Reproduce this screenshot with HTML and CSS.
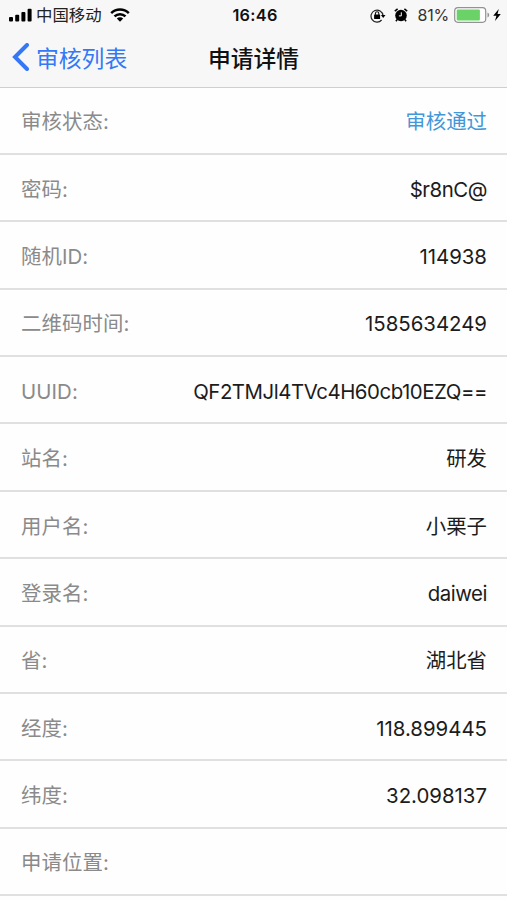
FILE: index.html
```html
<!DOCTYPE html>
<html lang="zh-CN">
<head>
  <meta charset="UTF-8">
  <meta name="viewport" content="width=device-width, initial-scale=1.0">
  <title>申请详情</title>
  <link rel="stylesheet" href="styles.css">
</head>
<body>

<header class="header">
  <div class="status-bar">
    <div class="status-left">
      <svg class="signal" width="23" height="14" viewBox="0 0 23 14">
        <rect x="0" y="9" width="4" height="4.5" rx="1"/>
        <rect x="6.2" y="6.8" width="4" height="6.7" rx="1"/>
        <rect x="12.4" y="4" width="4" height="9.5" rx="1"/>
        <rect x="18.6" y="0.8" width="4" height="12.7" rx="1"/>
      </svg>
      <span class="carrier">中国移动</span>
      <svg class="wifi" width="20" height="14" viewBox="0 0 20 14">
        <path d="M1.2 5.1a12.5 12.5 0 0 1 17.6 0M4.5 8.4a7.8 7.8 0 0 1 11 0" fill="none" stroke="#000" stroke-width="2.5"/>
        <path d="M6.8 10.5a4.5 4.5 0 0 1 6.4 0L10 13.7z"/>
      </svg>
    </div>
    <span class="clock">16:46</span>
    <div class="status-right">
      <svg class="lock" width="17" height="15" viewBox="0 0 17 15">
        <path d="M11.6 12A6 6 0 1 1 13 7.4" fill="none" stroke="#222" stroke-width="1.2"/>
        <path d="M10.9 7h4.6l-2.3 3z"/>
        <rect x="4.1" y="6.6" width="6" height="4.4" rx=".6"/>
        <path d="M5.4 7V5.4a1.7 1.7 0 0 1 3.4 0V7" fill="none" stroke="#111" stroke-width="1.1"/>
      </svg>
      <svg class="alarm" width="14" height="14" viewBox="0 0 14 14">
        <circle cx="7" cy="7.5" r="5.8"/>
        <path d="M.8 3.1L3.6.9M13.2 3.1L10.4.9M3.2 11.5L1.9 13.2M10.8 11.5l1.3 1.7" fill="none" stroke="#000" stroke-width="1.5"/>
        <path d="M7.3 4.3v3.6H4.9" fill="none" stroke="#fff" stroke-width="1"/>
      </svg>
      <span class="percent">81%</span>
      <svg class="battery" width="36" height="16" viewBox="0 0 36 16">
        <rect x=".7" y=".7" width="31" height="14.6" rx="3.2" fill="#fff" stroke="#929292" stroke-width="1.2"/>
        <rect x="2.7" y="2.6" width="23.2" height="10.8" rx="1" fill="#6bd268"/>
        <path d="M33.5 5.5c2.2.7 2.2 4.3 0 5z" fill="#929292"/>
      </svg>
      <svg class="bolt" width="8" height="12" viewBox="0 0 8 12">
        <path d="M5.8 0L.2 6.8h3.2L2 12l5.8-7H4.5z"/>
      </svg>
    </div>
  </div>
  <nav class="nav-bar">
    <a class="back" href="#">
      <svg width="17" height="28" viewBox="0 0 17 28">
        <path d="M15 2L3 14l12 12" fill="none" stroke="#3478f6" stroke-width="4" stroke-linecap="round"/>
      </svg>
      <span>审核列表</span>
    </a>
    <h1 class="title">申请详情</h1>
  </nav>
</header>

<main class="detail-list">
  <div class="row"><span class="label">审核状态:</span><span class="value passed">审核通过</span></div>
  <div class="row"><span class="label">密码:</span><span class="value latin">$r8nC@</span></div>
  <div class="row"><span class="label">随机ID:</span><span class="value">114938</span></div>
  <div class="row"><span class="label">二维码时间:</span><span class="value">1585634249</span></div>
  <div class="row"><span class="label">UUID:</span><span class="value latin">QF2TMJl4TVc4H60cb10EZQ==</span></div>
  <div class="row"><span class="label">站名:</span><span class="value">研发</span></div>
  <div class="row"><span class="label">用户名:</span><span class="value">小栗子</span></div>
  <div class="row"><span class="label">登录名:</span><span class="value latin">daiwei</span></div>
  <div class="row"><span class="label">省:</span><span class="value">湖北省</span></div>
  <div class="row"><span class="label">经度:</span><span class="value">118.899445</span></div>
  <div class="row"><span class="label">纬度:</span><span class="value">32.098137</span></div>
  <div class="row"><span class="label">申请位置:</span><span class="value"></span></div>
</main>

</body>
</html>
```
FILE: styles.css
```css
* {
    box-sizing: border-box;
}
body {
    font-family: Inter, 'Noto Sans CJK SC', sans-serif;
    margin: 0;
    height: 900px;
    overflow: hidden;
    background: #fefefe;
    color: #1c1c1c;
}
.header {
    height: 88px;
    background: #f7f7f7;
    border-bottom: 1px solid #cfcfcf;
}
.status-bar {
    display: grid;
    grid-template-columns: 1fr auto 1fr;
    align-items: center;
    height: 30px;
    padding: 0 6px 0 9px;
    color: #111;
}
.status-left,
.status-right {
    display: flex;
    align-items: center;
}
.status-right {
    justify-content: flex-end;
}
.carrier {
    margin: 0 8px 0 4px;
    font-size: 16.4px;
    line-height: 30px;
    color: #222;
}
.clock {
    font-size: 16.3px;
    font-weight: 600;
    letter-spacing: 0.3px;
}
.alarm {
    margin: 0 9px 0 7px;
}
.percent {
    font-size: 16px;
    letter-spacing: -0.2px;
    margin-right: 5px;
    color: #333;
}
.bolt {
    margin-left: 3px;
}
.nav-bar {
    display: grid;
    grid-template-columns: 1fr auto 1fr;
    align-items: center;
    height: 54px;
    padding: 0 12px;
}
.back {
    display: flex;
    align-items: center;
    gap: 7px;
    color: #3478f6;
    font-size: 22.8px;
    text-decoration: none;
}
.title {
    margin: 0;
    font-size: 22.8px;
    font-weight: 500;
    color: #111;
}
.row {
    display: flex;
    align-items: center;
    justify-content: space-between;
    height: 67.4px;
    padding: 4px 20px 0 21px;
    border-bottom: 2px solid #e0e0e0;
    font-size: 20.4px;
    line-height: 24px;
}
.row:first-child {
    height: 66.9px;
}
.label {
    letter-spacing: 0.1px;
    color: #8a8a8a;
}
.latin {
    letter-spacing: -0.45px;
}
.passed {
    color: #4397d8;
}
```
